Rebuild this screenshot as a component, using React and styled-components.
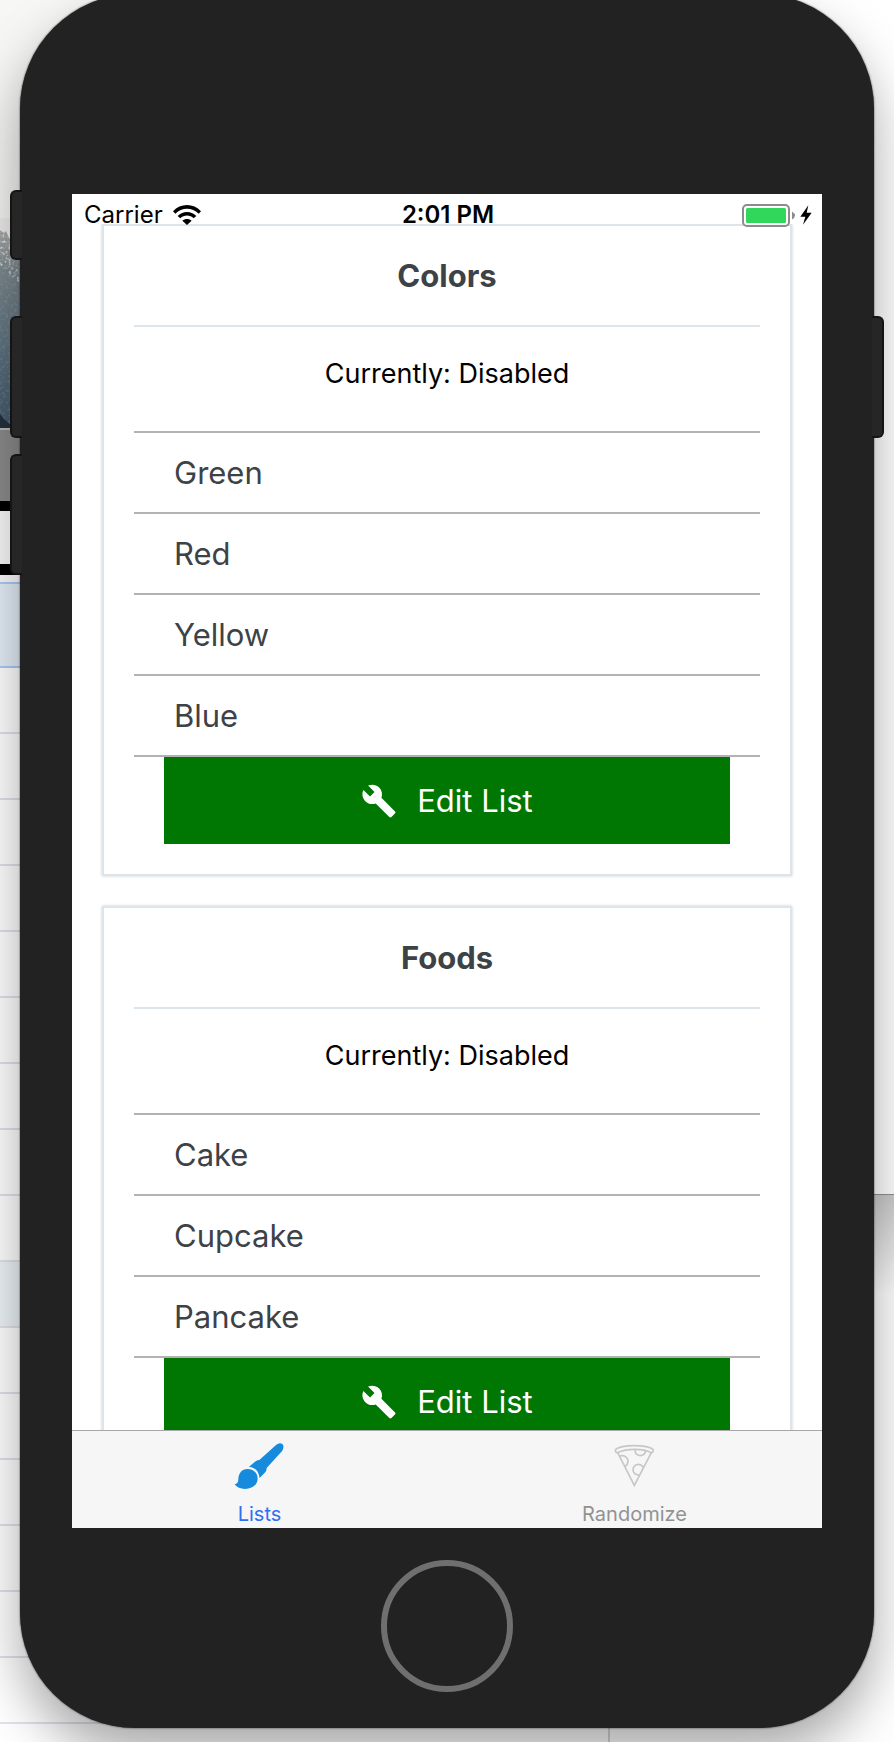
import React from "react";
import styled, { createGlobalStyle } from "styled-components";
import { MdBuild } from "react-icons/md";

const GlobalStyle = createGlobalStyle`
  *, *::before, *::after { box-sizing: border-box; }
  html, body { margin: 0; padding: 0; }
  body {
    background: #fff;
    color: #000;
    font-family: Inter, "Liberation Sans", sans-serif;
    overflow: hidden;
  }
`;

const Desktop = styled.div`
  display: grid;
  grid-template-columns: minmax(0, 1fr);
  overflow: hidden;
`;

const Backdrop = styled.div`
  grid-area: 1 / 1;
  display: flex;
  justify-content: space-between;
  height: 0;
  min-height: 100%;
`;

const LeftWindow = styled.div`
  flex: 0 0 610px;
  display: flex;
  flex-direction: column;
  border-right: 2px solid #d6d6d6;
`;

const RightWindow = styled.div`
  flex: 1;
  display: flex;
  flex-direction: column;
`;

const Strip = styled.div`
  flex: 0 0 ${(p) => p.$height}px;
  background: ${(p) => p.$fill};
  border-top: ${(p) => (p.$line ? `2px solid ${p.$line}` : "0")};
`;

const WindowShadow = styled.div`
  flex: 0 0 100px;
  border-top: 1px solid #8f8f8f;
  background: linear-gradient(#cacaca, #fff);
`;

const Phone = styled.div`
  grid-area: 1 / 1;
  position: relative;
  margin: -6px 20px 14px;
  padding: 200px 52px 36px;
  display: flex;
  flex-direction: column;
  align-items: center;
  gap: 32px;
  background: #222;
  border-radius: 115px;
  box-shadow: 0 0 2px rgba(0, 0, 0, 0.75), 0 26px 52px rgba(0, 0, 0, 0.34);
`;

const SideKey = styled.span`
  position: absolute;
  top: ${(p) => p.$top}px;
  ${(p) => p.$side}: -10px;
  width: 12px;
  height: ${(p) => p.$height}px;
  background: #262626;
  border: 2px solid #141414;
  border-${(p) => (p.$side === "left" ? "right" : "left")}: 0;
  border-radius: ${(p) => (p.$side === "left" ? "6px 0 0 6px" : "0 6px 6px 0")};
`;

const Screen = styled.div`
  width: 100%;
  aspect-ratio: 750 / 1334;
  display: flex;
  flex-direction: column;
  overflow: hidden;
  background: #fff;
`;

const StatusBar = styled.header`
  position: relative;
  z-index: 1;
  flex: 0 0 40px;
  margin-bottom: -10px;
  padding: 2px 10px 0 12px;
  display: grid;
  grid-template-columns: 1fr auto 1fr;
  align-items: center;
  font-size: 24px;
  line-height: 30px;
`;

const StatusLeft = styled.div`
  display: flex;
  align-items: center;
  gap: 10px;
`;

const Clock = styled.time`
  font-weight: 600;
`;

const StatusRight = styled.div`
  display: flex;
  align-items: center;
  justify-content: flex-end;
  gap: 5px;
`;

const ScrollView = styled.main`
  flex: 1 1 0;
  min-height: 0;
  overflow: hidden;
  padding: 0 30px;
  display: flex;
  flex-direction: column;
  gap: 30px;
`;

const CardBox = styled.section`
  flex: none;
  padding: 30px;
  border: 2px solid #dde5ec;
  box-shadow: 0 0 3px rgba(0, 0, 0, 0.2);
`;

const CardTitle = styled.h2`
  margin: 0;
  padding-bottom: 30px;
  border-bottom: 2px solid #dde5ec;
  color: #3d4247;
  font-size: 31px;
  font-weight: 700;
  line-height: 39px;
  text-align: center;
`;

const Status = styled.p`
  margin: 30px 0 40px;
  font-size: 27px;
  line-height: 34px;
  text-align: center;
`;

const Items = styled.ul`
  margin: 0;
  padding: 0;
  list-style: none;
  border-top: 2px solid #b2b2b2;
`;

const Item = styled.li`
  padding: 20px 40px 19px;
  border-bottom: 2px solid #b2b2b2;
  color: #3d4247;
  font-size: 31px;
  line-height: 40px;
`;

const EditButton = styled.button`
  display: flex;
  align-items: center;
  justify-content: center;
  gap: 20px;
  width: calc(100% - 60px);
  height: 87px;
  margin: 0 30px;
  padding: 0;
  border: 0;
  background: #007603;
  color: #fff;
  font: 400 31px/40px Inter, "Liberation Sans", sans-serif;
`;

const TabBar = styled.nav`
  flex: 0 0 98px;
  display: grid;
  grid-template-columns: 1fr 1fr;
  background: #f6f6f6;
  border-top: 1px solid #a7a7aa;
`;

const Tab = styled.a`
  display: flex;
  flex-direction: column;
  align-items: center;
  gap: 12px;
  padding-top: 9px;
  color: ${(p) => (p.$active ? "#2f6ff2" : "#929292")};
  font-size: 20px;
  line-height: 24px;
  text-decoration: none;
`;

const HomeButton = styled.button`
  width: 132px;
  height: 132px;
  padding: 0;
  border: 6px solid #6f6f6f;
  border-radius: 50%;
  background: transparent;
`;

const Photo = styled.svg`
  flex: none;
  display: block;
`;

const WinterPhoto = () => (
  <Photo width="40" height="210" viewBox="0 0 40 210" aria-hidden="true">
    <defs>
      <linearGradient id="forest" x1="0" y1="0" x2="0" y2="1">
        <stop offset="0" stopColor="#a5a6a5" />
        <stop offset="0.2" stopColor="#7a878c" />
        <stop offset="0.6" stopColor="#5b6f7c" />
        <stop offset="1" stopColor="#3f566a" />
      </linearGradient>
      <filter id="branches" x="0" y="0" width="100%" height="100%">
        <feTurbulence type="fractalNoise" baseFrequency="0.35" numOctaves="2" seed="4" />
        <feColorMatrix values="0 0 0 0 0.9  0 0 0 0 0.9  0 0 0 0 0.9  0 3 0 0 -1.5" />
        <feComposite in2="SourceGraphic" operator="in" />
      </filter>
    </defs>
    <rect width="40" height="210" fill="#e9e8e6" />
    <path d="M0 12 L4 15 L6 13 L9 20 L13 22 L15 28 L20 31 L40 50 V210 H0Z" fill="url(#forest)" />
    <path d="M0 12 L9 20 L20 31 L40 50 V100 L20 68 L0 46Z" fill="#fff" filter="url(#branches)" opacity="0.8" />
    <path d="M0 46 L20 68 L40 100 V210 H0Z" fill="#fff" filter="url(#branches)" opacity="0.15" />
    <path d="M0 196 Q8 208 20 210 H0Z" fill="#22303c" />
  </Photo>
);

const WifiIcon = () => (
  <svg width="28" height="20" viewBox="0 0 84 60" aria-hidden="true">
    <path d="M0 19 C22 -6 62 -6 84 19 L77 26 C57 6 27 6 7 26Z" />
    <path d="M14 33 C30 17 54 17 70 33 L62 40 C51 29 33 29 22 40Z" />
    <path d="M28 47 C36 40 48 40 56 47 L42 60Z" />
  </svg>
);

const BatteryIcon = () => (
  <svg width="53" height="23" viewBox="0 0 53 23" aria-hidden="true">
    <rect x="1" y="1" width="46" height="21" rx="4" fill="#fff" stroke="#8c8c8c" strokeWidth="2" />
    <rect x="4" y="4" width="40" height="15" rx="1.5" fill="#30d75b" />
    <path d="M50 7.500 Q56 11.500 50 15.500Z" fill="#8c8c8c" />
  </svg>
);

const BoltIcon = () => (
  <svg width="12" height="20" viewBox="0 0 36 60" aria-hidden="true">
    <path d="M25 1 L1 35 H16 L9 59 L35 23 H20Z" />
  </svg>
);

const BrushIcon = () => (
  <svg width="53" height="50" viewBox="0 0 159 150" fill="#168adc" aria-hidden="true">
    <path d="M48 80 L68 64 Q74 60 79 60 L130 14 Q140 6 148 12 Q155 19 148 32 L101 84 Q101 91 98 95 L80 114 C77 93 67 83 48 80Z" />
    <path d="M5 133 Q16 132 16 117 C17 99 27 87 43 87 C61 87 74 99 74 116 C73 135 57 147 36 147 C23 147 11 142 5 133Z" />
  </svg>
);

const PizzaIcon = () => (
  <svg width="43" height="50" viewBox="0 0 129 150" fill="none" stroke="#c7c7c7" strokeWidth="5" aria-hidden="true">
    <clipPath id="slice">
      <path d="M14 38 C40 25 90 25 115 38 L64 136Z" />
    </clipPath>
    <path d="M8 28 C26 13 102 13 120 28 C122 34 120 38 115 38 C90 25 40 25 14 38 C8 38 6 34 8 28Z" />
    <path d="M14 38 L64 136 L115 38" />
    <g clipPath="url(#slice)">
      <circle cx="76" cy="89" r="16" />
      <circle cx="28" cy="64" r="17" />
      <circle cx="82" cy="31" r="16" />
    </g>
  </svg>
);

const LEFT_STRIPS = [
  { height: 73, fill: "#898989", line: "#b5b5b5" },
  { height: 10, fill: "#000" },
  { height: 53, fill: "#f7f5f7" },
  { height: 11, fill: "#000" },
  { height: 7, fill: "#fbf8fb" },
  { height: 84, fill: "#e4edf7", line: "#a9cbf1" },
  { height: 66, fill: "#fff", line: "#a9cbf1" },
  ...Array.from({ length: 16 }, (_, i) => ({
    height: 66,
    fill: i === 8 ? "#edf3f8" : "#fff",
    line: "#e2e1ec",
  })),
];

const LISTS = [
  { name: "Colors", items: ["Green", "Red", "Yellow", "Blue"] },
  { name: "Foods", items: ["Cake", "Cupcake", "Pancake"] },
];

function ListCard({ name, items }) {
  return (
    <CardBox>
      <CardTitle>{name}</CardTitle>
      <Status>Currently: Disabled</Status>
      <Items>
        {items.map((item) => (
          <Item key={item}>{item}</Item>
        ))}
      </Items>
      <EditButton type="button">
        <MdBuild size={36} aria-hidden="true" />
        Edit List
      </EditButton>
    </CardBox>
  );
}

export default function App() {
  return (
    <>
      <GlobalStyle />
      <Desktop>
        <Backdrop aria-hidden="true">
          <LeftWindow>
            <Strip $height={218} $fill="linear-gradient(#f7f7f5, #f0f0ee)" />
            <WinterPhoto />
            {LEFT_STRIPS.map((s, i) => (
              <Strip key={i} $height={s.height} $fill={s.fill} $line={s.line} />
            ))}
          </LeftWindow>
          <RightWindow>
            <Strip $height={1194} $fill="#fff" />
            <WindowShadow />
          </RightWindow>
        </Backdrop>
        <Phone>
          <SideKey $side="left" $top={196} $height={70} />
          <SideKey $side="left" $top={322} $height={122} />
          <SideKey $side="left" $top={460} $height={121} />
          <SideKey $side="right" $top={322} $height={122} />
          <Screen>
            <StatusBar>
              <StatusLeft>
                <span>Carrier</span>
                <WifiIcon />
              </StatusLeft>
              <Clock>2:01 PM</Clock>
              <StatusRight>
                <BatteryIcon />
                <BoltIcon />
              </StatusRight>
            </StatusBar>
            <ScrollView>
              {LISTS.map((list) => (
                <ListCard key={list.name} {...list} />
              ))}
            </ScrollView>
            <TabBar>
              <Tab href="#lists" $active aria-current="page">
                <BrushIcon />
                Lists
              </Tab>
              <Tab href="#randomize">
                <PizzaIcon />
                Randomize
              </Tab>
            </TabBar>
          </Screen>
          <HomeButton type="button" aria-label="Home" />
        </Phone>
      </Desktop>
    </>
  );
}
